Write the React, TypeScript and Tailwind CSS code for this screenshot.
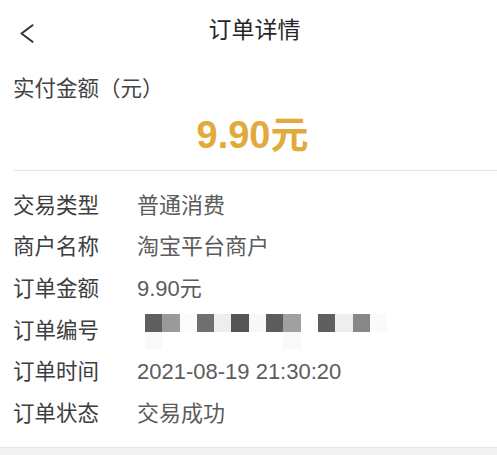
import React from "react";

const FONT = { fontFamily: '"Liberation Sans", "Noto Sans CJK SC", sans-serif' };

const rows: { label: string; value?: string; masked?: boolean }[] = [
  { label: "交易类型", value: "普通消费" },
  { label: "商户名称", value: "淘宝平台商户" },
  { label: "订单金额", value: "9.90元" },
  { label: "订单编号", masked: true },
  { label: "订单时间", value: "2021-08-19 21:30:20" },
  { label: "订单状态", value: "交易成功" },
];

const maskTop = [
  "bg-[#5f5f5f]",
  "bg-[#9a9a9a]",
  "bg-[#fbfbfb]",
  "bg-[#6f6f6f]",
  "bg-[#eeeeee]",
  "bg-[#555555]",
  "bg-[#f8f8f8]",
  "bg-[#5c5c5c]",
  "bg-[#a0a0a0]",
  "bg-[#ffffff]",
  "bg-[#5f5f5f]",
  "bg-[#eeeeee]",
  "bg-[#878787]",
  "bg-[#fafafa]",
];
const maskBottom = [
  "bg-[#f9f9f9]",
  "bg-white",
  "bg-white",
  "bg-white",
  "bg-white",
  "bg-white",
  "bg-white",
  "bg-white",
  "bg-[#f9f9f9]",
  "bg-white",
  "bg-white",
  "bg-white",
  "bg-white",
  "bg-white",
];

function Masked() {
  return (
    <div className="ml-[8px] mt-[2px] flex flex-col shrink-0">
      <div className="flex">
        {maskTop.map((c, i) => (
          <div key={i} className={`h-[17.5px] w-[17.3px] shrink-0 ${c}`} />
        ))}
      </div>
      <div className="flex">
        {maskBottom.map((c, i) => (
          <div key={i} className={`h-[17.5px] w-[17.3px] shrink-0 ${c}`} />
        ))}
      </div>
    </div>
  );
}

export default function App() {
  return (
    <div className="w-[497px] h-[455px] bg-white flex flex-col overflow-hidden" style={FONT}>
      {/* header */}
      <div className="relative h-[60px] flex items-center justify-center pl-[12px]">
        <svg
          className="absolute left-[20px] top-[24px]"
          width="14"
          height="19"
          viewBox="0 0 14 19"
          fill="none"
        >
          <path d="M12.5 1.2 L1.5 9.5 L12.5 17.8" stroke="#333333" strokeWidth="2" strokeLinecap="round" strokeLinejoin="round" />
        </svg>
        <span className="text-[23px] leading-[30px] text-[#262626]">订单详情</span>
      </div>

      {/* paid amount */}
      <div className="mt-[15px] pl-[13px] text-[21.5px] leading-[28px] text-[#444444]">实付金额（元）</div>
      <div className="mt-[9px] flex justify-center pl-[8px]">
        <span className="text-[38px] leading-[46px] font-bold text-[#e2a93b]">9.90元</span>
      </div>

      {/* divider */}
      <div className="mt-[12px] ml-[14px] h-px bg-[#e2e2e2]" />

      {/* rows */}
      <div className="pt-[14px] flex flex-col">
        {rows.map((r) => (
          <div key={r.label} className="h-[41.6px] flex items-center">
            <div className="w-[137px] shrink-0 pl-[13px] text-[21.5px] leading-[28px] text-[#3d3d3d]">{r.label}</div>
            {r.masked ? (
              <Masked />
            ) : (
              <div className="text-[22px] leading-[28px] text-[#5c5c5c]">{r.value}</div>
            )}
          </div>
        ))}
      </div>

      <div className="flex-1" />
      <div className="h-[8px] border-t border-[#e6e6e6] bg-[#f3f3f3]" />
    </div>
  );
}
